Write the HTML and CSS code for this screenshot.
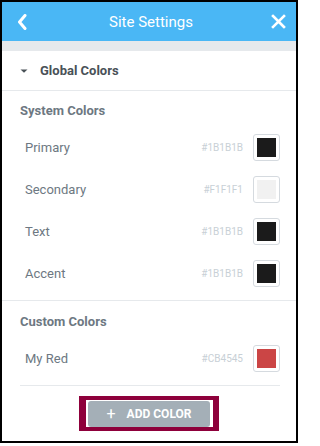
FILE: index.html
```html
<!DOCTYPE html>
<html>
<head>
<meta charset="utf-8">
<link rel="stylesheet" href="styles.css">
</head>
<body>
<div class="panel">
  <header class="header">
    <svg class="back" width="10" height="16" viewBox="0 0 10 16"><path d="M8 1.5 L2.5 8 L8 14.5" fill="none" stroke="#fff" stroke-width="3" stroke-linecap="round" stroke-linejoin="round"/></svg>
    <div class="title">Site Settings</div>
    <svg class="close" width="15" height="15" viewBox="0 0 15 15"><path d="M2 2 L13 13 M13 2 L2 13" fill="none" stroke="#fff" stroke-width="2.6" stroke-linecap="square"/></svg>
  </header>
  <div class="strip"></div>
  <div class="section-head">
    <svg class="caret" width="8" height="4" viewBox="0 0 8 4"><path d="M0.5 0.5 L7.5 0.5 L4 3.8 Z" fill="#495157"/></svg>
    <span>Global Colors</span>
  </div>
  <div class="group">
    <div class="group-title">System Colors</div>
    <div class="row"><span class="label">Primary</span><span class="hex">#1B1B1B</span><span class="swatch"><span class="fill c-dark"></span></span></div>
    <div class="row"><span class="label">Secondary</span><span class="hex">#F1F1F1</span><span class="swatch"><span class="fill c-light"></span></span></div>
    <div class="row"><span class="label">Text</span><span class="hex">#1B1B1B</span><span class="swatch"><span class="fill c-dark"></span></span></div>
    <div class="row"><span class="label">Accent</span><span class="hex">#1B1B1B</span><span class="swatch"><span class="fill c-dark"></span></span></div>
  </div>
  <div class="group custom">
    <div class="group-title">Custom Colors</div>
    <div class="row"><span class="label">My Red</span><span class="hex">#CB4545</span><span class="swatch"><span class="fill c-red"></span></span></div>
    <div class="divider"></div>
    <div class="highlight">
      <button class="add"><span class="plus">+</span>ADD COLOR</button>
    </div>
  </div>
</div>
</body>
</html>
```
FILE: styles.css
```css
* { box-sizing: border-box; }
body {
  margin: 0;
  background: #fff;
  font-family: Roboto, "Liberation Sans", sans-serif;
}
.panel {
  width: 298px;
  height: 443px;
  border: 2px solid #000;
  background: #fff;
  display: flex;
  flex-direction: column;
}
.header {
  height: 39px;
  background: #4ab7f5;
  display: flex;
  align-items: center;
  padding: 0 10px 0 15px;
  color: #fff;
}
.back { flex: none; }
.title {
  flex: 1;
  text-align: center;
  font-size: 15px;
  margin-left: 4px;
}
.close { flex: none; }
.strip {
  height: 10px;
  background: #e6e9ec;
}
.section-head {
  height: 40px;
  border-bottom: 1px solid #e6e9ec;
  display: flex;
  align-items: center;
  padding-left: 18px;
  font-size: 13px;
  font-weight: 700;
  color: #495157;
}
.caret { margin-right: 12px; margin-top: 1px; }
.group {
  padding: 12px 16px 6px 0;
  border-bottom: 1px solid #e6e9ec;
  display: flex;
  flex-direction: column;
}
.group.custom {
  border-bottom: none;
  padding-top: 13px;
  padding-bottom: 0;
}
.group-title {
  height: 16px;
  line-height: 16px;
  padding-left: 18px;
  font-size: 13px;
  font-weight: 700;
  color: #6d7882;
  margin-bottom: 7px;
}
.row {
  height: 42px;
  display: flex;
  align-items: center;
  padding-left: 23px;
}
.label {
  flex: 1;
  font-size: 13px;
  color: #6d7882;
}
.hex {
  font-size: 10px;
  color: #c8d0d6;
  margin-right: 10px;
}
.swatch {
  width: 27px;
  height: 27px;
  border: 1px solid #d5dadf;
  border-radius: 3px;
  padding: 3px;
  display: flex;
}
.fill { flex: 1; }
.c-dark { background: #1b1b1b; }
.c-light { background: #f1f1f1; }
.c-red { background: #cb4545; }
.divider {
  height: 1px;
  background: #e6e9ec;
  margin: 6px 0 0 18px;
}
.highlight {
  align-self: center;
  margin: 10px 0 0 16px;
  border-style: solid;
  border-color: #8e003b;
  border-width: 4px 6px 4px 7px;
  padding: 1px 3px 0 2px;
  background: #fff;
  display: flex;
}
.add {
  width: 122px;
  height: 26px;
  border: none;
  border-radius: 3px;
  background: #a4afb7;
  color: #fff;
  font-family: Roboto, "Liberation Sans", sans-serif;
  font-size: 12px;
  font-weight: 700;
  display: flex;
  align-items: center;
  justify-content: center;
  padding: 0;
}
.plus {
  font-size: 16px;
  font-weight: 400;
  margin-right: 11px;
  margin-top: -2px;
}
```
